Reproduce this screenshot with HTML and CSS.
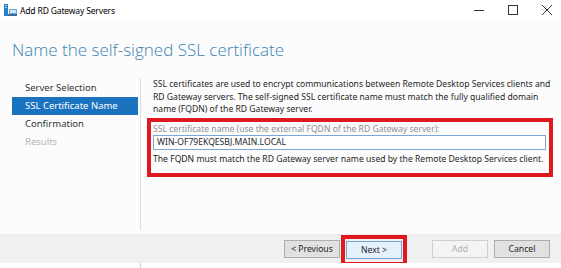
FILE: index.html
```html
<!DOCTYPE html>
<html lang="en">
<head>
    <meta charset="UTF-8">
    <meta name="viewport" content="width=device-width, initial-scale=1.0">
    <title>Add RD Gateway Servers</title>
    <link rel="stylesheet" href="styles.css">
</head>
<body>
    <div class="window">
        <div class="titlebar">
            <svg class="app-icon" width="13" height="12" viewBox="0 0 13 12">
                <rect x="0" y="0" width="4" height="12" fill="#2b7fc4"/>
                <rect x="1" y="1" width="2" height="1" fill="#9fd0f5"/>
                <rect x="1" y="3" width="2" height="1" fill="#9fd0f5"/>
                <rect x="5" y="5" width="8" height="7" fill="#6aa7d8"/>
                <rect x="6" y="6" width="6" height="3" fill="#cfe6f8"/>
                <rect x="4" y="10" width="9" height="2" fill="#3b6f9e"/>
            </svg>
            <span class="title">Add RD Gateway Servers</span>
            <div class="controls">
                <svg width="10" height="10" viewBox="0 0 10 10"><path d="M0 5.5h10" stroke="#333" stroke-width="1"/></svg>
                <svg width="10" height="10" viewBox="0 0 10 10"><rect x="0.5" y="0.5" width="9" height="9" fill="none" stroke="#333" stroke-width="1"/></svg>
                <svg width="10" height="10" viewBox="0 0 10 10"><path d="M0 0L10 10M10 0L0 10" stroke="#333" stroke-width="1"/></svg>
            </div>
        </div>

        <div class="main">
            <h1>Name the self-signed SSL certificate</h1>
            <div class="wizard">
                <ul class="steps">
                    <li>Server Selection</li>
                    <li class="active">SSL Certificate Name</li>
                    <li>Confirmation</li>
                    <li class="disabled">Results</li>
                </ul>
                <div class="content">
                    <p class="intro">SSL certificates are used to encrypt communications between Remote Desktop Services clients and RD Gateway servers. The self-signed SSL certificate name must match the fully qualified domain name (FQDN) of the RD Gateway server.</p>
                    <div class="highlight">
                        <label for="certName">SSL certificate name (use the external FQDN of the RD Gateway server):</label>
                        <input type="text" id="certName" value="WIN-OF79EKQESBJ.MAIN.LOCAL">
                        <p class="note">The FQDN must match the RD Gateway server name used by the Remote Desktop Services client.</p>
                    </div>
                </div>
            </div>
        </div>

        <div class="footer">
            <button>&lt; Previous</button>
            <span class="highlight-btn"><button>Next &gt;</button></span>
            <button class="add" disabled>Add</button>
            <button>Cancel</button>
        </div>
        <div class="bottom-strip"><div class="strip-line"></div></div>
    </div>
</body>
</html>
```

FILE: styles.css
```css
* {
    box-sizing: border-box;
    margin: 0;
    padding: 0;
}

body {
    font-family: "Noto Sans", "Open Sans", sans-serif;
    background-color: #fcfcfc;
    color: #1e1e1e;
}

.window {
    width: 561px;
    height: 268px;
    display: flex;
    flex-direction: column;
    overflow: hidden;
}

.titlebar {
    height: 20px;
    background-color: #ffffff;
    display: flex;
    align-items: center;
    padding-left: 4px;
}

.app-icon {
    margin-right: 3px;
}

.title {
    font-size: 8.5px;
    letter-spacing: -0.15px;
    color: #000;
}

.controls {
    margin-left: auto;
    display: flex;
    gap: 24px;
    padding-right: 9px;
}

.main {
    flex: 1;
    padding: 18px 0 0 12px;
}

h1 {
    font-family: "Open Sans", "Noto Sans", sans-serif;
    font-weight: 300;
    font-size: 17px;
    line-height: 24px;
    color: #3a82b3;
    margin-bottom: 16px;
}

.wizard {
    display: flex;
    height: 152px;
}

.steps {
    list-style: none;
    width: 126px;
    padding-top: 1px;
    font-size: 9.5px;
}

.steps li {
    height: 18px;
    line-height: 18px;
    padding-left: 13px;
    color: #333;
}

.steps li.active {
    background-color: #1b72bf;
    color: #fff;
}

.steps li.disabled {
    color: #b4b4b4;
}

.content {
    flex: 1;
    border-left: 1px solid #dedede;
    margin-left: 2px;
    padding: 0 8px 0 6px;
    font-size: 8.6px;
    line-height: 12.5px;
}

.intro {
    padding-left: 6px;
}

.highlight {
    border: 4px solid #e0191f;
    padding: 2px 3px 8px 2px;
    margin-top: 2px;
}

label {
    display: block;
    color: #8e8e8e;
    line-height: 11px;
}

input {
    display: block;
    width: 100%;
    height: 15px;
    border: 1px solid #7aa7d6;
    background: #fff;
    font-family: inherit;
    font-size: 8.6px;
    padding: 0 3px;
    color: #1e1e1e;
}

.note {
    margin-top: 3px;
}

.footer {
    height: 29px;
    background-color: #f0f0f0;
    border-top: 1px solid #e8e8e8;
    display: flex;
    align-items: center;
    justify-content: flex-end;
    padding-right: 11px;
    gap: 6px;
}

.footer button {
    width: 56px;
    height: 18px;
    border: 1px solid #adadad;
    background-color: #e1e1e1;
    font-family: inherit;
    font-size: 8.6px;
    color: #1e1e1e;
}

.highlight-btn {
    border: 4px solid #e0191f;
    padding: 2px 1px 3px;
    margin: 2px 19px 0 -5px;
}

.highlight-btn button {
    display: block;
    border-color: #6fa5d8;
    background-color: #e5f1fb;
}

.footer button.add {
    color: #b0b0b0;
    border-color: #cfcfcf;
    background-color: #f4f4f4;
}

.bottom-strip {
    position: relative;
    height: 5px;
    background-color: #fff;
}

.strip-line {
    width: 1px;
    height: 5px;
    margin-left: 140px;
    background-color: #d4d4d4;
}
```
